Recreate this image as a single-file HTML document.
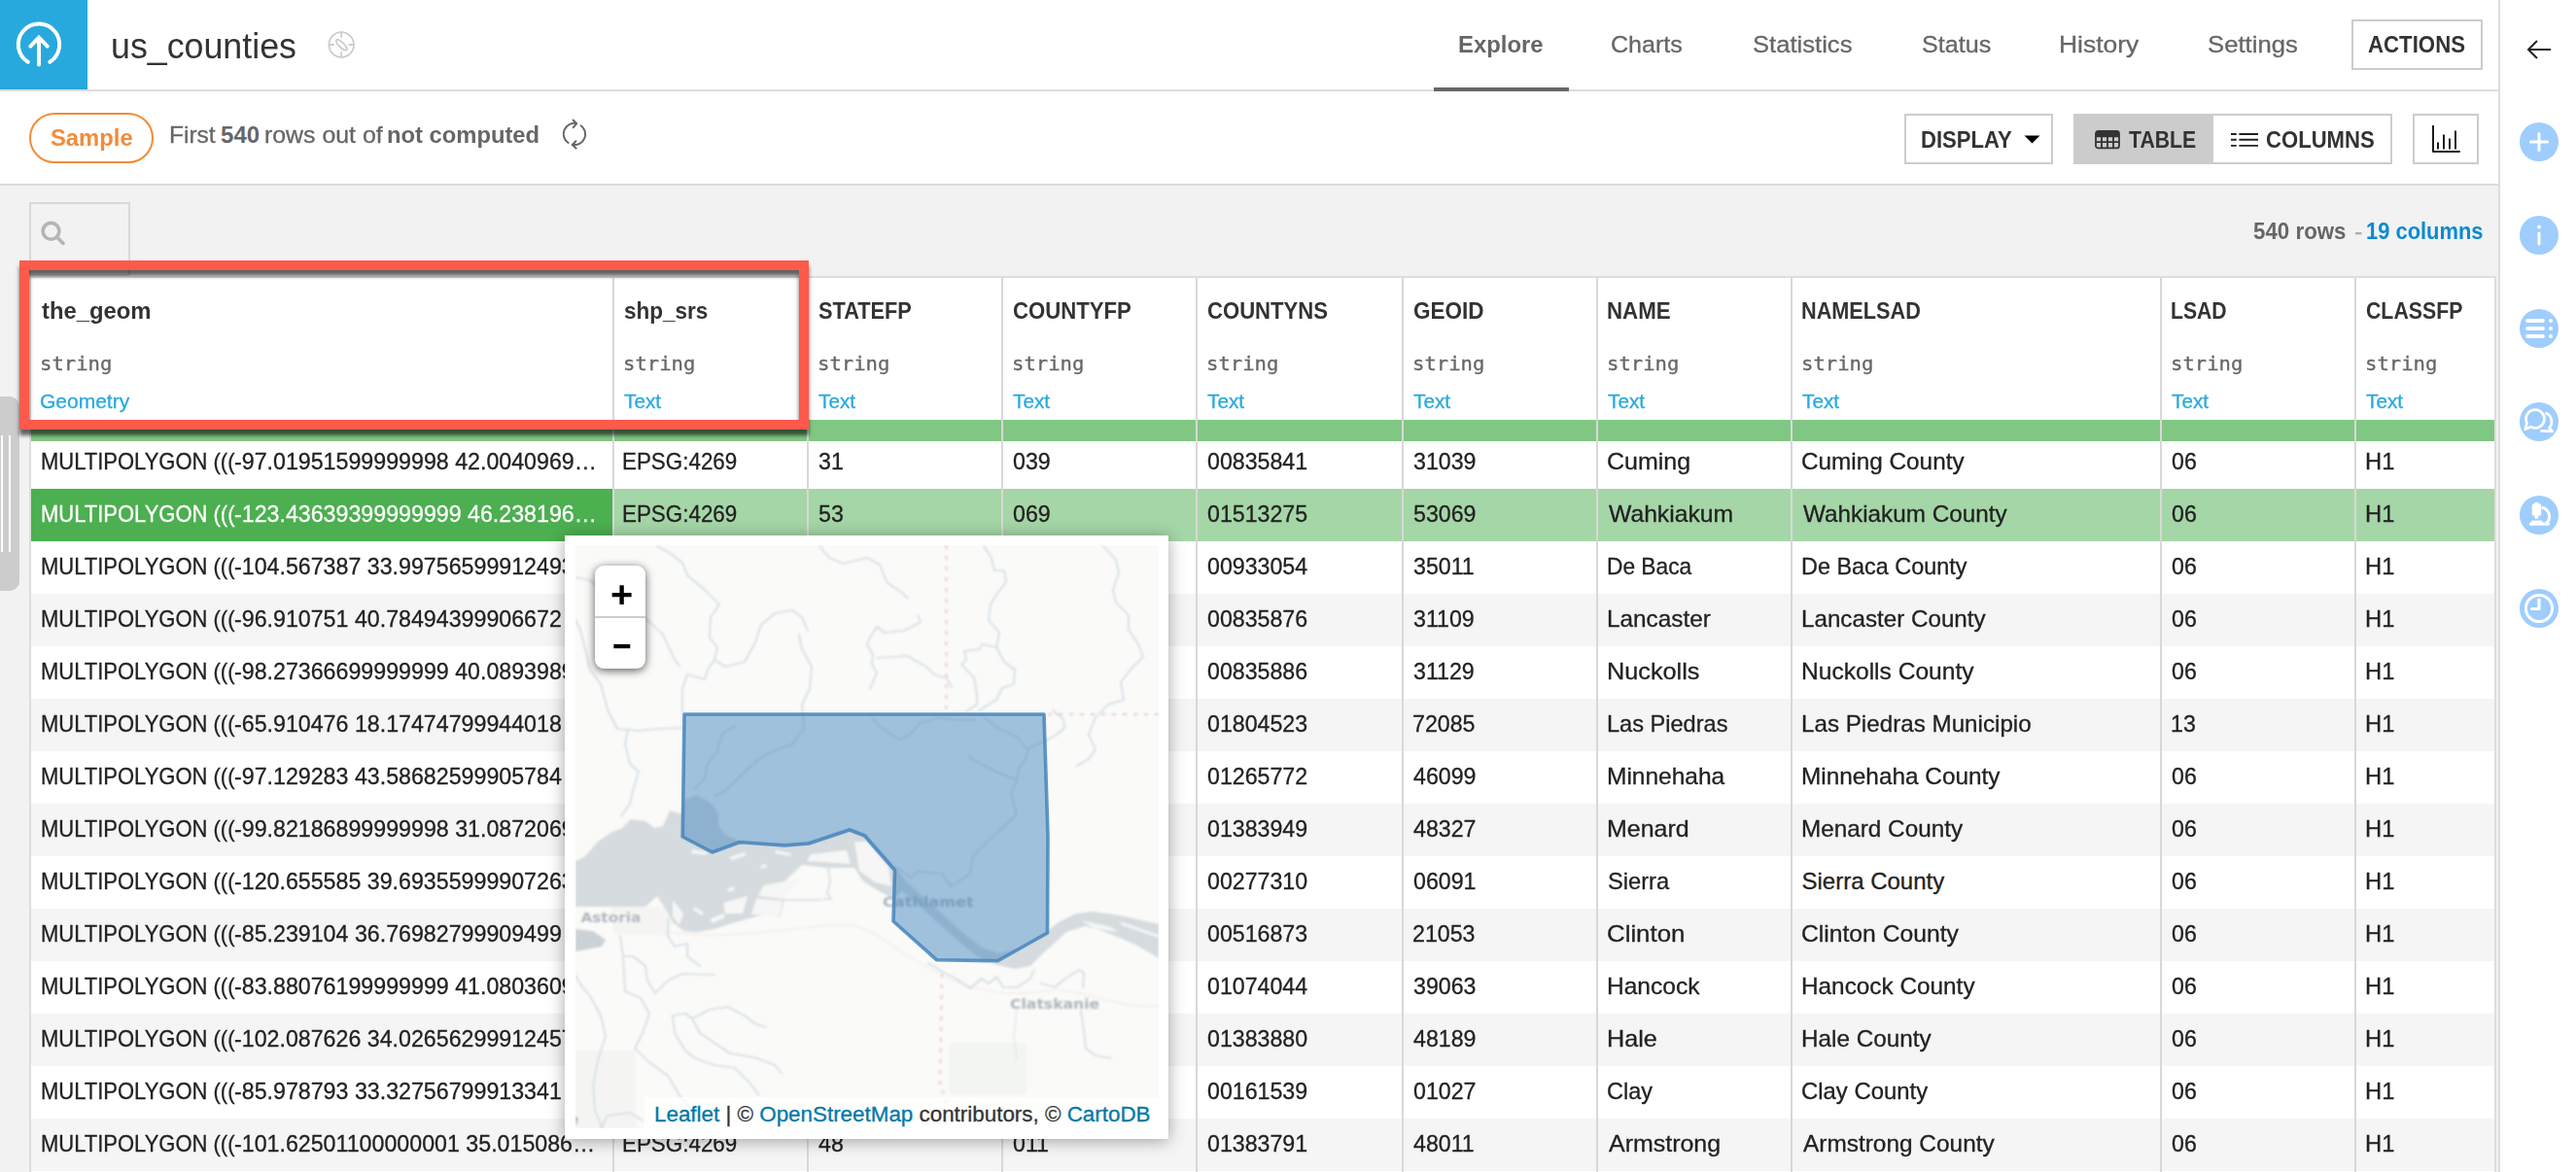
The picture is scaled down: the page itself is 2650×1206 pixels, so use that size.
<!DOCTYPE html>
<html lang="en"><head><meta charset="utf-8"><title>us_counties - Explore</title>
<style>
*{box-sizing:border-box;margin:0;padding:0}
html,body{width:2650px;height:1206px;overflow:hidden}
body{position:relative;background:#f2f2f2;font-family:"Liberation Sans",Arial,sans-serif;color:#333}
.abs{position:absolute}
.t{position:absolute;white-space:nowrap;line-height:1;transform-origin:0 50%}
.r{-webkit-text-stroke:.3px currentColor}
.hdr{position:absolute;left:0;top:0;width:2570px;height:92px;background:#fff}
.hline{position:absolute;left:0;top:92px;width:2570px;height:2px;background:#dcdcdc}
.bar2{position:absolute;left:0;top:94px;width:2570px;height:95px;background:#fff}
.hline2{position:absolute;left:0;top:189px;width:2570px;height:2px;background:#dadada}
.logo{position:absolute;left:0;top:0;width:90px;height:92px;background:#28a9dd}
.uline{position:absolute;left:1475px;top:90px;width:139px;height:4px;background:#666}
.btn{position:absolute;border:2px solid #ccc;background:#fff;font-weight:bold;color:#333;font-size:24px;white-space:nowrap}
.rp{position:absolute;left:2570px;top:0;width:80px;height:1206px;background:#fff;border-left:2px solid #ddd}
.circ{position:absolute;left:20px;width:40px;height:40px;border-radius:50%;background:#9fcdfd}
.pill{position:absolute;left:30px;top:116px;width:128px;height:52px;border:2px solid #f28c38;border-radius:26px}
.search{position:absolute;left:30px;top:208px;width:104px;height:76px;border:2px solid #d9d9d9;background:#f2f2f2}
.handle{position:absolute;left:-10px;top:408px;width:30px;height:200px;border-radius:10px;background:#ccc}
.handle:before,.handle:after{content:"";position:absolute;top:40px;height:120px;width:2px;background:#fff}
.handle:before{left:11px}.handle:after{left:19px}
/* table */
.tbl{position:absolute;left:30px;top:284px;width:2538px;border-right:2px solid #ddd;height:922px;background:#fff;border-top:2px solid #ddd;border-left:2px solid #ddd;overflow:hidden}
.tbl>*{margin-left:-2px;margin-top:-2px}
.gbar{position:absolute;left:0;top:148px;width:2539px;height:22px;background:#81c784}
.row{position:absolute;left:0;width:2539px;height:54px;background:#fff}
.row.odd{background:#f5f5f5}
.row.sel{background:#a5d6a7}
.row .g{position:absolute;top:0;height:54px;background:#4caf50}
.sep{position:absolute;top:0;width:2px;height:924px;background:#d8d8d8}
.redbox{position:absolute;left:20px;top:268px;width:812px;height:174px;border:10px solid #fd5a4c;box-shadow:0 6px 4px rgba(0,0,0,.6), inset 0 6px 4px rgba(0,0,0,.6)}
/* popup */
.pop{position:absolute;left:581px;top:551px;width:621px;height:621px;background:#fff;box-shadow:0 2px 16px rgba(0,0,0,.35)}
.map{position:absolute;left:11px;top:10px;width:600px;height:600px;background:#fafaf8;overflow:hidden}
.zc{position:absolute;left:20px;top:21px;width:52px;height:106px;background:#fff;border-radius:9px;box-shadow:0 2px 10px rgba(0,0,0,.65)}
.zc .ln{position:absolute;left:0;width:52px;top:52px;height:2px;background:#ccc}
.attr{position:absolute;right:0;bottom:0;height:32px;width:529px;padding:0 0 0 10px;background:rgba(255,255,255,.7);font-size:22.4px;line-height:35px;color:#333;white-space:nowrap;-webkit-text-stroke:.3px currentColor}
.attr a{color:#0078a8;text-decoration:none}
</style></head><body>
<div class="hdr"></div><div class="hline"></div><div class="bar2"></div><div class="hline2"></div>
<div class="logo"><svg width="90" height="92" viewBox="0 0 90 92"><path d="M28.800 63.800A21.200 21.200 0 1 1 51.200 63.800" fill="none" stroke="#fff" stroke-width="4" stroke-linecap="round"/><path d="M40 66.500V39M31.300 47.600L40 38.700L48.700 47.600" fill="none" stroke="#fff" stroke-width="4" stroke-linecap="round" stroke-linejoin="miter"/></svg></div>
<svg class="abs" style="left:335px;top:30px" width="32" height="32" viewBox="0 0 32 32"><g fill="none" stroke="#ccc" stroke-width="1.8" stroke-linecap="round"><circle cx="16.2" cy="16" r="12.8"/><path d="M16.2 3.5v4.5M16.2 24v4.5M3.7 16h4.5M24.2 16h4.5"/><ellipse cx="16.300" cy="16.200" rx="7.400" ry="2.500" transform="rotate(44 16.300 16.200)"/></g></svg>
<div class="uline"></div>
<div class="btn" style="left:2419px;top:20px;width:135px;height:52px;line-height:48px;text-align:center"></div>

<div class="pill"></div>
<svg class="abs" style="left:575px;top:122px" width="32" height="32" viewBox="0 0 32 32"><g fill="none" stroke="#666" stroke-width="2" stroke-linecap="round" stroke-linejoin="round"><path d="M9.6 25 A11 11 0 0 1 17.5 5"/><path d="M14.5 1.6 L18.3 5.2 L14.8 9.2"/><path d="M22.6 7.2 A11 11 0 0 1 14.6 27"/><path d="M17.4 23.3 L13.7 27 L17.6 30.6"/></g></svg>

<div class="btn" style="left:1959px;top:117px;width:153px;height:52px;line-height:48px;padding-left:17px"><svg class="abs" style="left:121px;top:20px" width="18" height="10" viewBox="0 0 18 10"><path d="M0.5 0.5h16L8.5 8.5z" fill="#000"/></svg></div>
<div class="btn" style="left:2133px;top:117px;width:144px;height:52px;line-height:48px;padding-left:56px;background:#ccc;border-color:#ccc"><svg class="abs" style="left:20px;top:15px" width="26" height="20" viewBox="0 0 26 20"><g fill="none" stroke="#333" stroke-width="1.8"><rect x="1" y="1" width="24" height="17.4" rx="2.5"/><path d="M1 6.4h24M1 12.2h24M7 6.4v12M13 6.4v12M19 6.4v12"/></g><rect x="1" y="1" width="24" height="5.4" rx="2" fill="#333"/></svg></div>
<div class="btn" style="left:2277px;top:117px;width:184px;height:52px;line-height:48px;padding-left:54px;border-left:none"><svg class="abs" style="left:17px;top:18px" width="30" height="16" viewBox="0 0 30 16"><g stroke="#222" stroke-width="1.900"><path d="M1 1h5.700M9.400 1H29M1 6.800h5.700M9.400 6.800H29M1 12.900h5.700M9.400 12.900H29"/></g></svg></div>
<div class="btn" style="left:2482px;top:117px;width:68px;height:52px"><svg class="abs" style="left:18px;top:10px" width="30" height="30" viewBox="0 0 30 30"><g fill="none" stroke="#1c1c1c" stroke-width="2" stroke-linecap="round" stroke-linejoin="round"><path d="M1 0.500V27H28"/><path d="M6 23.800V18.200M12 23.800V10.200M18 23.800V14.200M24 23.800V6.300"/></g></svg></div>

<div class="search"><svg class="abs" style="left:8px;top:14px" width="32" height="32" viewBox="0 0 32 32"><g fill="none" stroke="#b5b5b5" stroke-width="3.6" stroke-linecap="round"><circle cx="12.5" cy="13.8" r="8.4"/><path d="M18.8 20.2L25 26.4"/></g></svg></div>
<div class="handle"></div>

<div class="rp">
<svg class="abs" style="left:26px;top:39px" width="28" height="24" viewBox="0 0 28 24"><path d="M26 12H3M12 3L3 12l9 9" fill="none" stroke="#222" stroke-width="2"/></svg>
<div class="circ" style="top:126px"><svg width="40" height="40" viewBox="0 0 40 40"><path d="M20 11.5v17M11.5 20h17" stroke="#fff" stroke-width="3" stroke-linecap="round"/></svg></div>
<div class="circ" style="top:222px"><svg width="40" height="40" viewBox="0 0 40 40"><path d="M20 18v11" stroke="#fff" stroke-width="3" stroke-linecap="round"/><circle cx="20" cy="11.5" r="2" fill="#fff"/></svg></div>
<div class="circ" style="top:318px"><svg width="40" height="40" viewBox="0 0 40 40"><g stroke="#fff" stroke-width="4.200" stroke-linecap="round"><path d="M8.200 12h15.600M8.200 20h15.600M8.200 28h15.600"/></g><circle cx="32" cy="12" r="2.100" fill="#fff"/><circle cx="32" cy="20" r="2.100" fill="#fff"/><circle cx="32" cy="28" r="2.100" fill="#fff"/></svg></div>
<div class="circ" style="top:414px"><svg width="40" height="40" viewBox="0 0 40 40"><g fill="none" stroke="#fff" stroke-width="2.800" stroke-linejoin="round" stroke-linecap="round"><path d="M27.470 11.280A9.400 9.400 0 0 1 30.490 26.090L33.600 29.900L22.400 29.300"/><path d="M16 7.600A9.400 9.400 0 1 1 11.300 25.140L5.800 27.800L7.480 20.970A9.400 9.400 0 0 1 16 7.600Z" fill="#9fcdfd"/></g></svg></div>
<div class="circ" style="top:510px"><svg width="40" height="40" viewBox="0 0 40 40"><rect x="12.700" y="8.300" width="9.500" height="12.400" rx="2" fill="#fff"/><rect x="15.500" y="6.800" width="4" height="3" rx="1" fill="#fff"/><path d="M15.200 20.500h4.400l-.6 3.200h-3.200z" fill="#fff"/><path d="M22.500 12.300A9.300 9.300 0 0 1 27.400 28.500" fill="none" stroke="#fff" stroke-width="3"/><rect x="10" y="27.600" width="20.700" height="3.200" rx="1" fill="#fff"/><rect x="12.300" y="25.600" width="11" height="2.400" fill="#fff"/></svg></div>
<div class="circ" style="top:606px"><svg width="40" height="40" viewBox="0 0 40 40"><g fill="none" stroke="#fff" stroke-linecap="round" stroke-linejoin="round"><circle cx="20" cy="20" r="13.600" stroke-width="3"/><path d="M20 11V20.500H12.600" stroke-width="3.200"/></g></svg></div>
</div>

<span class="t" style="left:114.0px;top:28.5px;font-size:37px;color:#333;transform:scaleX(0.967);">us_counties</span>
<span class="t" style="left:1500.3px;top:33.6px;font-size:24.5px;font-weight:bold;color:#666;transform:scaleX(0.974);">Explore</span>
<span class="t r" style="left:1657.3px;top:33.6px;font-size:24.5px;color:#666;transform:scaleX(1.023);">Charts</span>
<span class="t r" style="left:1802.9px;top:33.6px;font-size:24.5px;color:#666;transform:scaleX(1.045);">Statistics</span>
<span class="t r" style="left:1976.5px;top:33.6px;font-size:24.5px;color:#666;transform:scaleX(1.028);">Status</span>
<span class="t r" style="left:2117.5px;top:33.6px;font-size:24.5px;color:#666;transform:scaleX(1.080);">History</span>
<span class="t r" style="left:2271.3px;top:33.6px;font-size:24.5px;color:#666;transform:scaleX(1.048);">Settings</span>
<span class="t" style="left:2436.4px;top:34.1px;font-size:24px;font-weight:bold;color:#333;transform:scaleX(0.926);">ACTIONS</span>
<span class="t" style="left:52.2px;top:130.0px;font-size:24.5px;font-weight:bold;color:#f28c38;transform:scaleX(0.971);">Sample</span>
<span class="t r" style="left:174.0px;top:126.5px;font-size:24px;color:#666;transform:scaleX(1.022);">First</span>
<span class="t" style="left:227.1px;top:126.5px;font-size:24px;font-weight:bold;color:#666;">540</span>
<span class="t r" style="left:271.9px;top:126.5px;font-size:24px;color:#666;transform:scaleX(1.036);">rows out of</span>
<span class="t" style="left:398.2px;top:126.5px;font-size:24px;font-weight:bold;color:#666;transform:scaleX(0.990);">not computed</span>
<span class="t" style="left:1976.3px;top:131.9px;font-size:24px;font-weight:bold;color:#333;transform:scaleX(0.921);">DISPLAY</span>
<span class="t" style="left:2190.1px;top:131.9px;font-size:24px;font-weight:bold;color:#333;transform:scaleX(0.884);">TABLE</span>
<span class="t" style="left:2331.1px;top:131.9px;font-size:24px;font-weight:bold;color:#333;transform:scaleX(0.921);">COLUMNS</span>
<span class="t" style="left:2318.3px;top:225.7px;font-size:24px;font-weight:bold;color:#666;transform:scaleX(0.930);">540 rows</span>
<span class="t r" style="left:2421.9px;top:225.7px;font-size:24px;color:#aaa;transform:scaleX(1.034);">-</span>
<span class="t" style="left:2434.0px;top:225.7px;font-size:24px;font-weight:bold;color:#0b8ad2;transform:scaleX(0.913);">19 columns</span>
<div class="tbl">
<div class="row" style="top:165px"></div>
<div class="row odd sel" style="top:219px"><div class="g" style="left:2px;width:598px"></div></div>
<div class="row" style="top:273px"></div>
<div class="row odd" style="top:327px"></div>
<div class="row" style="top:381px"></div>
<div class="row odd" style="top:435px"></div>
<div class="row" style="top:489px"></div>
<div class="row odd" style="top:543px"></div>
<div class="row" style="top:597px"></div>
<div class="row odd" style="top:651px"></div>
<div class="row" style="top:705px"></div>
<div class="row odd" style="top:759px"></div>
<div class="row" style="top:813px"></div>
<div class="row odd" style="top:867px"></div>
<div class="gbar"></div>
<div class="sep" style="left:600px"></div>
<div class="sep" style="left:800px"></div>
<div class="sep" style="left:1000px"></div>
<div class="sep" style="left:1200px"></div>
<div class="sep" style="left:1412px"></div>
<div class="sep" style="left:1612px"></div>
<div class="sep" style="left:1812px"></div>
<div class="sep" style="left:2192px"></div>
<div class="sep" style="left:2392px"></div>
<div class="sep" style="left:2538px"></div>
</div>
<span class="t" style="left:42.6px;top:307.8px;font-size:24px;font-weight:bold;color:#333;transform:scaleX(0.993);">the_geom</span>
<span class="t r" style="left:40.9px;top:363.9px;font-size:20px;color:#666;font-family:'DejaVu Sans Mono','Liberation Mono',monospace;transform:scaleX(1.028);">string</span>
<span class="t r" style="left:41.4px;top:403.3px;font-size:20.5px;color:#28a9dd;transform:scaleX(1.024);">Geometry</span>
<span class="t" style="left:641.8px;top:307.8px;font-size:24px;font-weight:bold;color:#333;transform:scaleX(0.938);">shp_srs</span>
<span class="t r" style="left:640.6px;top:363.9px;font-size:20px;color:#666;font-family:'DejaVu Sans Mono','Liberation Mono',monospace;transform:scaleX(1.028);">string</span>
<span class="t r" style="left:641.6px;top:403.3px;font-size:20.5px;color:#28a9dd;transform:scaleX(1.014);">Text</span>
<span class="t" style="left:842.0px;top:307.8px;font-size:24px;font-weight:bold;color:#333;transform:scaleX(0.906);">STATEFP</span>
<span class="t r" style="left:840.6px;top:363.9px;font-size:20px;color:#666;font-family:'DejaVu Sans Mono','Liberation Mono',monospace;transform:scaleX(1.028);">string</span>
<span class="t r" style="left:841.6px;top:403.3px;font-size:20.5px;color:#28a9dd;transform:scaleX(1.014);">Text</span>
<span class="t" style="left:1041.7px;top:307.8px;font-size:24px;font-weight:bold;color:#333;transform:scaleX(0.923);">COUNTYFP</span>
<span class="t r" style="left:1040.6px;top:363.9px;font-size:20px;color:#666;font-family:'DejaVu Sans Mono','Liberation Mono',monospace;transform:scaleX(1.028);">string</span>
<span class="t r" style="left:1041.6px;top:403.3px;font-size:20.5px;color:#28a9dd;transform:scaleX(1.014);">Text</span>
<span class="t" style="left:1241.7px;top:307.8px;font-size:24px;font-weight:bold;color:#333;transform:scaleX(0.921);">COUNTYNS</span>
<span class="t r" style="left:1240.6px;top:363.9px;font-size:20px;color:#666;font-family:'DejaVu Sans Mono','Liberation Mono',monospace;transform:scaleX(1.028);">string</span>
<span class="t r" style="left:1241.6px;top:403.3px;font-size:20.5px;color:#28a9dd;transform:scaleX(1.014);">Text</span>
<span class="t" style="left:1453.7px;top:307.8px;font-size:24px;font-weight:bold;color:#333;transform:scaleX(0.938);">GEOID</span>
<span class="t r" style="left:1452.6px;top:363.9px;font-size:20px;color:#666;font-family:'DejaVu Sans Mono','Liberation Mono',monospace;transform:scaleX(1.028);">string</span>
<span class="t r" style="left:1453.6px;top:403.3px;font-size:20.5px;color:#28a9dd;transform:scaleX(1.014);">Text</span>
<span class="t" style="left:1653.1px;top:307.8px;font-size:24px;font-weight:bold;color:#333;transform:scaleX(0.930);">NAME</span>
<span class="t r" style="left:1652.6px;top:363.9px;font-size:20px;color:#666;font-family:'DejaVu Sans Mono','Liberation Mono',monospace;transform:scaleX(1.028);">string</span>
<span class="t r" style="left:1653.6px;top:403.3px;font-size:20.5px;color:#28a9dd;transform:scaleX(1.014);">Text</span>
<span class="t" style="left:1853.2px;top:307.8px;font-size:24px;font-weight:bold;color:#333;transform:scaleX(0.903);">NAMELSAD</span>
<span class="t r" style="left:1852.6px;top:363.9px;font-size:20px;color:#666;font-family:'DejaVu Sans Mono','Liberation Mono',monospace;transform:scaleX(1.028);">string</span>
<span class="t r" style="left:1853.6px;top:403.3px;font-size:20.5px;color:#28a9dd;transform:scaleX(1.014);">Text</span>
<span class="t" style="left:2233.2px;top:307.8px;font-size:24px;font-weight:bold;color:#333;transform:scaleX(0.882);">LSAD</span>
<span class="t r" style="left:2232.6px;top:363.9px;font-size:20px;color:#666;font-family:'DejaVu Sans Mono','Liberation Mono',monospace;transform:scaleX(1.028);">string</span>
<span class="t r" style="left:2233.6px;top:403.3px;font-size:20.5px;color:#28a9dd;transform:scaleX(1.014);">Text</span>
<span class="t" style="left:2433.7px;top:307.8px;font-size:24px;font-weight:bold;color:#333;transform:scaleX(0.887);">CLASSFP</span>
<span class="t r" style="left:2432.6px;top:363.9px;font-size:20px;color:#666;font-family:'DejaVu Sans Mono','Liberation Mono',monospace;transform:scaleX(1.028);">string</span>
<span class="t r" style="left:2433.6px;top:403.3px;font-size:20.5px;color:#28a9dd;transform:scaleX(1.014);">Text</span>
<span class="t r" style="left:41.6px;top:462.5px;font-size:24px;color:#222;transform:scaleX(0.916);">MULTIPOLYGON (((</span>
<span class="t r" style="left:240.5px;top:462.5px;font-size:24px;color:#222;transform:scaleX(0.967);">-97.01951599999998 42.0040969…</span>
<span class="t r" style="left:640.3px;top:462.5px;font-size:24px;color:#222;transform:scaleX(0.933);">EPSG:4269</span>
<span class="t r" style="left:841.9px;top:462.5px;font-size:24px;color:#222;transform:scaleX(0.966);">31</span>
<span class="t r" style="left:1041.9px;top:462.5px;font-size:24px;color:#222;transform:scaleX(0.966);">039</span>
<span class="t r" style="left:1241.8px;top:462.5px;font-size:24px;color:#222;transform:scaleX(0.966);">00835841</span>
<span class="t r" style="left:1453.6px;top:462.5px;font-size:24px;color:#222;transform:scaleX(0.966);">31039</span>
<span class="t r" style="left:1653.4px;top:462.5px;font-size:24px;color:#222;transform:scaleX(1.041);">Cuming</span>
<span class="t r" style="left:1853.4px;top:462.5px;font-size:24px;color:#222;transform:scaleX(1.013);">Cuming County</span>
<span class="t r" style="left:2233.6px;top:462.5px;font-size:24px;color:#222;transform:scaleX(0.966);">06</span>
<span class="t r" style="left:2432.8px;top:462.5px;font-size:24px;color:#222;transform:scaleX(0.989);">H1</span>
<span class="t r" style="left:41.6px;top:516.5px;font-size:24px;color:#fff;transform:scaleX(0.916);">MULTIPOLYGON (((</span>
<span class="t r" style="left:240.5px;top:516.5px;font-size:24px;color:#fff;transform:scaleX(0.967);">-123.43639399999999 46.238196…</span>
<span class="t r" style="left:640.3px;top:516.5px;font-size:24px;color:#222;transform:scaleX(0.933);">EPSG:4269</span>
<span class="t r" style="left:841.8px;top:516.5px;font-size:24px;color:#222;transform:scaleX(0.966);">53</span>
<span class="t r" style="left:1041.9px;top:516.5px;font-size:24px;color:#222;transform:scaleX(0.966);">069</span>
<span class="t r" style="left:1241.8px;top:516.5px;font-size:24px;color:#222;transform:scaleX(0.966);">01513275</span>
<span class="t r" style="left:1453.5px;top:516.5px;font-size:24px;color:#222;transform:scaleX(0.966);">53069</span>
<span class="t r" style="left:1654.5px;top:516.5px;font-size:24px;color:#222;transform:scaleX(1.029);">Wahkiakum</span>
<span class="t r" style="left:1854.5px;top:516.5px;font-size:24px;color:#222;transform:scaleX(1.012);">Wahkiakum County</span>
<span class="t r" style="left:2233.6px;top:516.5px;font-size:24px;color:#222;transform:scaleX(0.966);">06</span>
<span class="t r" style="left:2432.8px;top:516.5px;font-size:24px;color:#222;transform:scaleX(0.989);">H1</span>
<span class="t r" style="left:41.6px;top:570.5px;font-size:24px;color:#222;transform:scaleX(0.916);">MULTIPOLYGON (((</span>
<span class="t r" style="left:240.5px;top:570.5px;font-size:24px;color:#222;transform:scaleX(0.967);">-104.567387 33.99756599912493 34.0</span>
<span class="t r" style="left:640.3px;top:570.5px;font-size:24px;color:#222;transform:scaleX(0.933);">EPSG:4269</span>
<span class="t r" style="left:841.9px;top:570.5px;font-size:24px;color:#222;transform:scaleX(0.966);">35</span>
<span class="t r" style="left:1041.9px;top:570.5px;font-size:24px;color:#222;transform:scaleX(0.966);">011</span>
<span class="t r" style="left:1241.8px;top:570.5px;font-size:24px;color:#222;transform:scaleX(0.966);">00933054</span>
<span class="t r" style="left:1453.6px;top:570.5px;font-size:24px;color:#222;transform:scaleX(0.966);">35011</span>
<span class="t r" style="left:1652.7px;top:570.5px;font-size:24px;color:#222;transform:scaleX(0.947);">De Baca</span>
<span class="t r" style="left:1852.7px;top:570.5px;font-size:24px;color:#222;transform:scaleX(0.975);">De Baca County</span>
<span class="t r" style="left:2233.6px;top:570.5px;font-size:24px;color:#222;transform:scaleX(0.966);">06</span>
<span class="t r" style="left:2432.8px;top:570.5px;font-size:24px;color:#222;transform:scaleX(0.989);">H1</span>
<span class="t r" style="left:41.6px;top:624.5px;font-size:24px;color:#222;transform:scaleX(0.916);">MULTIPOLYGON (((</span>
<span class="t r" style="left:240.5px;top:624.5px;font-size:24px;color:#222;transform:scaleX(0.967);">-96.910751 40.78494399906672 40.9</span>
<span class="t r" style="left:640.3px;top:624.5px;font-size:24px;color:#222;transform:scaleX(0.933);">EPSG:4269</span>
<span class="t r" style="left:841.9px;top:624.5px;font-size:24px;color:#222;transform:scaleX(0.966);">31</span>
<span class="t r" style="left:1041.1px;top:624.5px;font-size:24px;color:#222;transform:scaleX(0.966);">109</span>
<span class="t r" style="left:1241.8px;top:624.5px;font-size:24px;color:#222;transform:scaleX(0.966);">00835876</span>
<span class="t r" style="left:1453.6px;top:624.5px;font-size:24px;color:#222;transform:scaleX(0.966);">31109</span>
<span class="t r" style="left:1652.6px;top:624.5px;font-size:24px;color:#222;transform:scaleX(1.014);">Lancaster</span>
<span class="t r" style="left:1852.6px;top:624.5px;font-size:24px;color:#222;transform:scaleX(1.008);">Lancaster County</span>
<span class="t r" style="left:2233.6px;top:624.5px;font-size:24px;color:#222;transform:scaleX(0.966);">06</span>
<span class="t r" style="left:2432.8px;top:624.5px;font-size:24px;color:#222;transform:scaleX(0.989);">H1</span>
<span class="t r" style="left:41.6px;top:678.5px;font-size:24px;color:#222;transform:scaleX(0.916);">MULTIPOLYGON (((</span>
<span class="t r" style="left:240.5px;top:678.5px;font-size:24px;color:#222;transform:scaleX(0.967);">-98.27366699999999 40.0893989 40.1</span>
<span class="t r" style="left:640.3px;top:678.5px;font-size:24px;color:#222;transform:scaleX(0.933);">EPSG:4269</span>
<span class="t r" style="left:841.9px;top:678.5px;font-size:24px;color:#222;transform:scaleX(0.966);">31</span>
<span class="t r" style="left:1041.1px;top:678.5px;font-size:24px;color:#222;transform:scaleX(0.966);">129</span>
<span class="t r" style="left:1241.8px;top:678.5px;font-size:24px;color:#222;transform:scaleX(0.966);">00835886</span>
<span class="t r" style="left:1453.6px;top:678.5px;font-size:24px;color:#222;transform:scaleX(0.966);">31129</span>
<span class="t r" style="left:1652.5px;top:678.5px;font-size:24px;color:#222;transform:scaleX(1.052);">Nuckolls</span>
<span class="t r" style="left:1852.6px;top:678.5px;font-size:24px;color:#222;transform:scaleX(1.024);">Nuckolls County</span>
<span class="t r" style="left:2233.6px;top:678.5px;font-size:24px;color:#222;transform:scaleX(0.966);">06</span>
<span class="t r" style="left:2432.8px;top:678.5px;font-size:24px;color:#222;transform:scaleX(0.989);">H1</span>
<span class="t r" style="left:41.6px;top:732.5px;font-size:24px;color:#222;transform:scaleX(0.916);">MULTIPOLYGON (((</span>
<span class="t r" style="left:240.5px;top:732.5px;font-size:24px;color:#222;transform:scaleX(0.967);">-65.910476 18.17474799944018 18.2</span>
<span class="t r" style="left:640.3px;top:732.5px;font-size:24px;color:#222;transform:scaleX(0.933);">EPSG:4269</span>
<span class="t r" style="left:841.6px;top:732.5px;font-size:24px;color:#222;transform:scaleX(0.966);">72</span>
<span class="t r" style="left:1041.9px;top:732.5px;font-size:24px;color:#222;transform:scaleX(0.966);">085</span>
<span class="t r" style="left:1241.8px;top:732.5px;font-size:24px;color:#222;transform:scaleX(0.966);">01804523</span>
<span class="t r" style="left:1453.3px;top:732.5px;font-size:24px;color:#222;transform:scaleX(0.966);">72085</span>
<span class="t r" style="left:1652.6px;top:732.5px;font-size:24px;color:#222;transform:scaleX(0.982);">Las Piedras</span>
<span class="t r" style="left:1852.6px;top:732.5px;font-size:24px;color:#222;transform:scaleX(1.008);">Las Piedras Municipio</span>
<span class="t r" style="left:2232.8px;top:732.5px;font-size:24px;color:#222;transform:scaleX(0.966);">13</span>
<span class="t r" style="left:2432.8px;top:732.5px;font-size:24px;color:#222;transform:scaleX(0.989);">H1</span>
<span class="t r" style="left:41.6px;top:786.5px;font-size:24px;color:#222;transform:scaleX(0.916);">MULTIPOLYGON (((</span>
<span class="t r" style="left:240.5px;top:786.5px;font-size:24px;color:#222;transform:scaleX(0.967);">-97.129283 43.58682599905784 43.6</span>
<span class="t r" style="left:640.3px;top:786.5px;font-size:24px;color:#222;transform:scaleX(0.933);">EPSG:4269</span>
<span class="t r" style="left:842.3px;top:786.5px;font-size:24px;color:#222;transform:scaleX(0.966);">46</span>
<span class="t r" style="left:1041.9px;top:786.5px;font-size:24px;color:#222;transform:scaleX(0.966);">099</span>
<span class="t r" style="left:1241.8px;top:786.5px;font-size:24px;color:#222;transform:scaleX(0.966);">01265772</span>
<span class="t r" style="left:1454.0px;top:786.5px;font-size:24px;color:#222;transform:scaleX(0.966);">46099</span>
<span class="t r" style="left:1652.6px;top:786.5px;font-size:24px;color:#222;transform:scaleX(1.021);">Minnehaha</span>
<span class="t r" style="left:1852.6px;top:786.5px;font-size:24px;color:#222;transform:scaleX(1.015);">Minnehaha County</span>
<span class="t r" style="left:2233.6px;top:786.5px;font-size:24px;color:#222;transform:scaleX(0.966);">06</span>
<span class="t r" style="left:2432.8px;top:786.5px;font-size:24px;color:#222;transform:scaleX(0.989);">H1</span>
<span class="t r" style="left:41.6px;top:840.5px;font-size:24px;color:#222;transform:scaleX(0.916);">MULTIPOLYGON (((</span>
<span class="t r" style="left:240.5px;top:840.5px;font-size:24px;color:#222;transform:scaleX(0.967);">-99.82186899999998 31.0872069 31.1</span>
<span class="t r" style="left:640.3px;top:840.5px;font-size:24px;color:#222;transform:scaleX(0.933);">EPSG:4269</span>
<span class="t r" style="left:842.3px;top:840.5px;font-size:24px;color:#222;transform:scaleX(0.966);">48</span>
<span class="t r" style="left:1041.9px;top:840.5px;font-size:24px;color:#222;transform:scaleX(0.966);">327</span>
<span class="t r" style="left:1241.8px;top:840.5px;font-size:24px;color:#222;transform:scaleX(0.966);">01383949</span>
<span class="t r" style="left:1454.0px;top:840.5px;font-size:24px;color:#222;transform:scaleX(0.966);">48327</span>
<span class="t r" style="left:1652.5px;top:840.5px;font-size:24px;color:#222;transform:scaleX(1.041);">Menard</span>
<span class="t r" style="left:1852.6px;top:840.5px;font-size:24px;color:#222;transform:scaleX(1.012);">Menard County</span>
<span class="t r" style="left:2233.6px;top:840.5px;font-size:24px;color:#222;transform:scaleX(0.966);">06</span>
<span class="t r" style="left:2432.8px;top:840.5px;font-size:24px;color:#222;transform:scaleX(0.989);">H1</span>
<span class="t r" style="left:41.6px;top:894.5px;font-size:24px;color:#222;transform:scaleX(0.916);">MULTIPOLYGON (((</span>
<span class="t r" style="left:240.5px;top:894.5px;font-size:24px;color:#222;transform:scaleX(0.967);">-120.655585 39.69355999907263 39.7</span>
<span class="t r" style="left:640.3px;top:894.5px;font-size:24px;color:#222;transform:scaleX(0.933);">EPSG:4269</span>
<span class="t r" style="left:841.9px;top:894.5px;font-size:24px;color:#222;transform:scaleX(0.966);">06</span>
<span class="t r" style="left:1041.9px;top:894.5px;font-size:24px;color:#222;transform:scaleX(0.966);">091</span>
<span class="t r" style="left:1241.8px;top:894.5px;font-size:24px;color:#222;transform:scaleX(0.966);">00277310</span>
<span class="t r" style="left:1453.6px;top:894.5px;font-size:24px;color:#222;transform:scaleX(0.966);">06091</span>
<span class="t r" style="left:1653.5px;top:894.5px;font-size:24px;color:#222;transform:scaleX(0.987);">Sierra</span>
<span class="t r" style="left:1853.5px;top:894.5px;font-size:24px;color:#222;">Sierra County</span>
<span class="t r" style="left:2233.6px;top:894.5px;font-size:24px;color:#222;transform:scaleX(0.966);">06</span>
<span class="t r" style="left:2432.8px;top:894.5px;font-size:24px;color:#222;transform:scaleX(0.989);">H1</span>
<span class="t r" style="left:41.6px;top:948.5px;font-size:24px;color:#222;transform:scaleX(0.916);">MULTIPOLYGON (((</span>
<span class="t r" style="left:240.5px;top:948.5px;font-size:24px;color:#222;transform:scaleX(0.967);">-85.239104 36.76982799909499 36.8</span>
<span class="t r" style="left:640.3px;top:948.5px;font-size:24px;color:#222;transform:scaleX(0.933);">EPSG:4269</span>
<span class="t r" style="left:841.6px;top:948.5px;font-size:24px;color:#222;transform:scaleX(0.966);">21</span>
<span class="t r" style="left:1041.9px;top:948.5px;font-size:24px;color:#222;transform:scaleX(0.966);">053</span>
<span class="t r" style="left:1241.8px;top:948.5px;font-size:24px;color:#222;transform:scaleX(0.966);">00516873</span>
<span class="t r" style="left:1453.3px;top:948.5px;font-size:24px;color:#222;transform:scaleX(0.966);">21053</span>
<span class="t r" style="left:1653.3px;top:948.5px;font-size:24px;color:#222;transform:scaleX(1.076);">Clinton</span>
<span class="t r" style="left:1853.4px;top:948.5px;font-size:24px;color:#222;transform:scaleX(1.028);">Clinton County</span>
<span class="t r" style="left:2233.6px;top:948.5px;font-size:24px;color:#222;transform:scaleX(0.966);">06</span>
<span class="t r" style="left:2432.8px;top:948.5px;font-size:24px;color:#222;transform:scaleX(0.989);">H1</span>
<span class="t r" style="left:41.6px;top:1002.5px;font-size:24px;color:#222;transform:scaleX(0.916);">MULTIPOLYGON (((</span>
<span class="t r" style="left:240.5px;top:1002.5px;font-size:24px;color:#222;transform:scaleX(0.967);">-83.88076199999999 41.0803609 41.1</span>
<span class="t r" style="left:640.3px;top:1002.5px;font-size:24px;color:#222;transform:scaleX(0.933);">EPSG:4269</span>
<span class="t r" style="left:841.9px;top:1002.5px;font-size:24px;color:#222;transform:scaleX(0.966);">39</span>
<span class="t r" style="left:1041.9px;top:1002.5px;font-size:24px;color:#222;transform:scaleX(0.966);">063</span>
<span class="t r" style="left:1241.8px;top:1002.5px;font-size:24px;color:#222;transform:scaleX(0.966);">01074044</span>
<span class="t r" style="left:1453.6px;top:1002.5px;font-size:24px;color:#222;transform:scaleX(0.966);">39063</span>
<span class="t r" style="left:1652.6px;top:1002.5px;font-size:24px;color:#222;transform:scaleX(1.022);">Hancock</span>
<span class="t r" style="left:1852.6px;top:1002.5px;font-size:24px;color:#222;transform:scaleX(1.014);">Hancock County</span>
<span class="t r" style="left:2233.6px;top:1002.5px;font-size:24px;color:#222;transform:scaleX(0.966);">06</span>
<span class="t r" style="left:2432.8px;top:1002.5px;font-size:24px;color:#222;transform:scaleX(0.989);">H1</span>
<span class="t r" style="left:41.6px;top:1056.5px;font-size:24px;color:#222;transform:scaleX(0.916);">MULTIPOLYGON (((</span>
<span class="t r" style="left:240.5px;top:1056.5px;font-size:24px;color:#222;transform:scaleX(0.967);">-102.087626 34.02656299912457 34.1</span>
<span class="t r" style="left:640.3px;top:1056.5px;font-size:24px;color:#222;transform:scaleX(0.933);">EPSG:4269</span>
<span class="t r" style="left:842.3px;top:1056.5px;font-size:24px;color:#222;transform:scaleX(0.966);">48</span>
<span class="t r" style="left:1041.1px;top:1056.5px;font-size:24px;color:#222;transform:scaleX(0.966);">189</span>
<span class="t r" style="left:1241.8px;top:1056.5px;font-size:24px;color:#222;transform:scaleX(0.966);">01383880</span>
<span class="t r" style="left:1454.0px;top:1056.5px;font-size:24px;color:#222;transform:scaleX(0.966);">48189</span>
<span class="t r" style="left:1652.5px;top:1056.5px;font-size:24px;color:#222;transform:scaleX(1.050);">Hale</span>
<span class="t r" style="left:1852.6px;top:1056.5px;font-size:24px;color:#222;transform:scaleX(1.012);">Hale County</span>
<span class="t r" style="left:2233.6px;top:1056.5px;font-size:24px;color:#222;transform:scaleX(0.966);">06</span>
<span class="t r" style="left:2432.8px;top:1056.5px;font-size:24px;color:#222;transform:scaleX(0.989);">H1</span>
<span class="t r" style="left:41.6px;top:1110.5px;font-size:24px;color:#222;transform:scaleX(0.916);">MULTIPOLYGON (((</span>
<span class="t r" style="left:240.5px;top:1110.5px;font-size:24px;color:#222;transform:scaleX(0.967);">-85.978793 33.32756799913341 33.4</span>
<span class="t r" style="left:640.3px;top:1110.5px;font-size:24px;color:#222;transform:scaleX(0.933);">EPSG:4269</span>
<span class="t r" style="left:841.9px;top:1110.5px;font-size:24px;color:#222;transform:scaleX(0.966);">01</span>
<span class="t r" style="left:1041.9px;top:1110.5px;font-size:24px;color:#222;transform:scaleX(0.966);">027</span>
<span class="t r" style="left:1241.8px;top:1110.5px;font-size:24px;color:#222;transform:scaleX(0.966);">00161539</span>
<span class="t r" style="left:1453.6px;top:1110.5px;font-size:24px;color:#222;transform:scaleX(0.966);">01027</span>
<span class="t r" style="left:1653.4px;top:1110.5px;font-size:24px;color:#222;transform:scaleX(0.979);">Clay</span>
<span class="t r" style="left:1853.4px;top:1110.5px;font-size:24px;color:#222;transform:scaleX(0.995);">Clay County</span>
<span class="t r" style="left:2233.6px;top:1110.5px;font-size:24px;color:#222;transform:scaleX(0.966);">06</span>
<span class="t r" style="left:2432.8px;top:1110.5px;font-size:24px;color:#222;transform:scaleX(0.989);">H1</span>
<span class="t r" style="left:41.6px;top:1164.5px;font-size:24px;color:#222;transform:scaleX(0.916);">MULTIPOLYGON (((</span>
<span class="t r" style="left:240.5px;top:1164.5px;font-size:24px;color:#222;transform:scaleX(0.967);">-101.62501100000001 35.015086…</span>
<span class="t r" style="left:640.3px;top:1164.5px;font-size:24px;color:#222;transform:scaleX(0.933);">EPSG:4269</span>
<span class="t r" style="left:842.3px;top:1164.5px;font-size:24px;color:#222;transform:scaleX(0.966);">48</span>
<span class="t r" style="left:1041.9px;top:1164.5px;font-size:24px;color:#222;transform:scaleX(0.966);">011</span>
<span class="t r" style="left:1241.8px;top:1164.5px;font-size:24px;color:#222;transform:scaleX(0.966);">01383791</span>
<span class="t r" style="left:1454.0px;top:1164.5px;font-size:24px;color:#222;transform:scaleX(0.966);">48011</span>
<span class="t r" style="left:1654.5px;top:1164.5px;font-size:24px;color:#222;transform:scaleX(1.040);">Armstrong</span>
<span class="t r" style="left:1854.5px;top:1164.5px;font-size:24px;color:#222;transform:scaleX(1.017);">Armstrong County</span>
<span class="t r" style="left:2233.6px;top:1164.5px;font-size:24px;color:#222;transform:scaleX(0.966);">06</span>
<span class="t r" style="left:2432.8px;top:1164.5px;font-size:24px;color:#222;transform:scaleX(0.989);">H1</span>
<div class="pop"><div class="map">
<svg class="abs" style="left:0;top:0" width="600" height="600" viewBox="0 0 600 600">
<defs><filter id="bl" x="-5%" y="-5%" width="110%" height="110%"><feGaussianBlur stdDeviation="0.8"/></filter></defs>
<rect width="600" height="600" fill="#fafaf8"/>
<g filter="url(#bl)">
<rect x="384" y="512" width="80" height="54" rx="6" fill="#f3f5f1"/>
<rect x="0" y="520" width="62" height="80" fill="#f4f5f2"/>
<path d="M36 372L92 372L100 390L95 402L40 400Z" fill="#f4f5f3"/>
<!-- water -->
<path fill="#d5dbde" d="M0 325L9 321L23 305L36 296L48 291L57 282L72 284L81 291L90 289L97 273L110 277L112 262L125 257L140 266L147 277L147 289L154 298L168 304L215 307L240 305L282 291L298 297L330 332L340 346L362 366L382 384L400 400L418 414L436 420L460 414L484 398L497 388L515 379L533 377L560 381L600 390L600 425L578 412L560 404L540 396L524 392L505 398L492 410L479 422L468 433L452 436L434 432L418 426L404 416L388 402L368 384L348 366L336 356L327 364L314 357L296 346L287 332L260 332L233 329L215 346L215 364L211 382L197 379L179 384L161 389L143 395L125 398L111 397L100 388L93 375L86 364L84 361L72 372L36 372L0 372Z"/>
<path fill="#cbd2d6" d="M0 395L18 397L31 406L27 413L0 418Z"/>
<!-- islands -->
<g fill="#f5f6f5">
<path d="M193.500 350L231 343L215 364.500L188 361Z"/><path d="M186 363.500L213 366L211 381L181 380Z"/>
<path d="M152 368L177 361L172 379L154 379Z"/><path d="M242 318L279 314L283 328L238 325Z"/>
<path d="M287 305L300 305L322 331L325 351L308 347L292 335Z"/><path d="M100 365L111 379L107 391L100 382Z"/>
<path d="M120 313l16 3-2 3-15-2z"/><path d="M158 321l16-5 2 3-15 5z"/><path d="M206 314l16 3-1 3-16-3z"/><path d="M190 330l6-2 1 3-6 2z"/>
<path d="M156 354l6-3 2 4-6 2z"/><path d="M122 372l10 6-2 3-9-6z"/><path d="M138 385l14-6 2 4-13 6z"/>
<path d="M520 386L551 393L558 398L533 394Z"/><path d="M560 387L600 401L600 404L562 391Z"/>
</g>
<g fill="none" stroke="#d5dbde" stroke-width="1.600"><path d="M215 365L253 365M260 332l2 14-3 12 4 6h-8"/></g>
<!-- faint roads -->
<g fill="none" stroke="#f3ecea" stroke-width="1.400"><path d="M95 398C150 405 200 398 250 392S300 397 351 428L377 443C400 455 440 466 479 459S556 479 600 474"/></g>
<!-- rivers -->
<g fill="none" stroke="#d2dde3" stroke-width="1.700" stroke-linejoin="round" stroke-linecap="round">
<path d="M84 1L97 8L110 18L115 31L133 46L148 61L139 74L138 95L146 105L143 118L136 128L133 138L115 133L110 148L110 174"/>
<path d="M143 118L154 125L174 120L184 102L191 82L205 70L223 67L233 74L239 88"/>
<path d="M230 92L233 107L243 125L241 148L233 164L235 189L223 205L202 212L189 220L169 238L154 253L143 258"/>
<path d="M0 33L15 36L26 46L50 60L74 77L90 92L102 118L107 124"/>
<path d="M0 77L5 87L10 107L15 128L26 143L33 169L43 189L66 191L84 189L110 188"/>
<path d="M54 189L51 205L56 225L65 233L59 253L56 266L47 279"/>
<path d="M164 186L151 194L146 212L136 225L133 240L123 251"/>
<path d="M251 1L261 13L276 19L300 13L313 20L320 38L336 49L342 55"/>
<path d="M352 72L355 79L338 88L318 90L310 84L303 95L300 102L306 113L305 123L310 131L303 148"/>
<path d="M310 116L341 114L361 125L369 133L382 137L387 146"/>
<path d="M420 1L428 13L431 26L441 26L443 38L433 51L427 61L425 77L436 90L433 105L418 102L416 107L400 109L402 118L397 123L410 136L413 154L413 164L402 171"/>
<path d="M433 105L441 120L452 128L451 143L439 147L433 159L415 170"/>
<path d="M543 1L556 15L559 28L553 46L556 59L569 72L569 87L579 102L584 115L571 128L561 141L564 159L548 164L535 177L528 195L535 210L528 220L516 227"/>
<path d="M491 170L502 179L503 188L495 195L484 201L466 209L464 218L456 230L454 243L448 256L454 276L452 279L440 290L425 304L409 320L406 338L386 351L377 338L352 336L345 342L330 331"/>
<path d="M305 177L313 187L326 195L333 200L344 195L354 183L372 178L397 180L410 180"/>
<path d="M420 177L436 189L454 197L464 209"/>
<path d="M405 218L415 224L433 233L454 242"/>
<path d="M0 443L8 456L15 464L26 484L31 505L23 530L18 556L20 582L28 600"/>
<path d="M46 402L49 423L51 459L67 466L76 482L69 502L61 518L77 533L95 546L107 566L120 582"/>
<path d="M49 423L59 423L72 433L74 448L82 461L95 448L110 441L143 442"/>
<path d="M95 384L95 402L102 413L115 410L115 423L128 433"/>
<path d="M100 484L113 482L120 487L138 478L156 475L174 484L184 492L196 496"/>
<path d="M120 487L128 502L143 512L159 523L184 527L205 535L212 543"/>
<path d="M100 484L102 502L113 520L123 528L143 535L164 538L179 553L189 566"/>
<path d="M26 600L33 587L56 584L69 592"/>
<path d="M363 430L379 440L393 447L406 456L418 446L425 451L433 444L440 455L454 455L468 446L472 437"/>
<path d="M479 451L493 455L504 446L518 437L523 440L522 456"/>
<path d="M520 479L523 500L525 518L535 525L551 528"/>
<path d="M454 479L451 505L454 530" stroke-opacity=".5"/>
</g>
<!-- state border -->
<g fill="none" stroke="#edc8cf" stroke-width="2" stroke-dasharray="4 7"><path d="M381.500 0V174"/><path d="M486 174H600"/><path d="M377 441L375 560L381 566L381 600"/></g>
<!-- labels -->
<g font-family="'DejaVu Sans','Liberation Sans',sans-serif" font-weight="bold" font-size="14" fill="#adb6bd">
<text x="5.400" y="387.700" textLength="62" lengthAdjust="spacingAndGlyphs">Astoria</text><text x="316" y="372.200" textLength="93.700" lengthAdjust="spacingAndGlyphs">Cathlamet</text><text x="447" y="477" textLength="92.200" lengthAdjust="spacingAndGlyphs">Clatskanie</text><text x="-6" y="596">e</text>
</g>
</g>
<!-- polygon -->
<path d="M112 174L482 174L486 300L485.500 399L434.400 427.700L371.700 426.800L327 387L328.500 334.500L297.500 299L282 293L240 307L215 309L168.500 305.700L140.700 316L110.200 300Z" fill="#4687c0" fill-opacity=".5" stroke="#4585bd" stroke-opacity=".85" stroke-width="3.600" stroke-linejoin="round"/>
</svg>
<div class="zc"><div class="ln"></div></div>
<div class="attr"><a>Leaflet</a> | © <a>OpenStreetMap</a> contributors, © <a>CartoDB</a></div>
</div></div>

<span class="t" style="left:628.0px;top:592.3px;font-size:39px;font-weight:bold;color:#000;transform:scaleX(1.020);">+</span>
<span class="t" style="left:629.5px;top:644.5px;font-size:39px;font-weight:bold;color:#000;transform:scaleX(0.867);">−</span>
<div class="redbox"></div>
</body></html>
